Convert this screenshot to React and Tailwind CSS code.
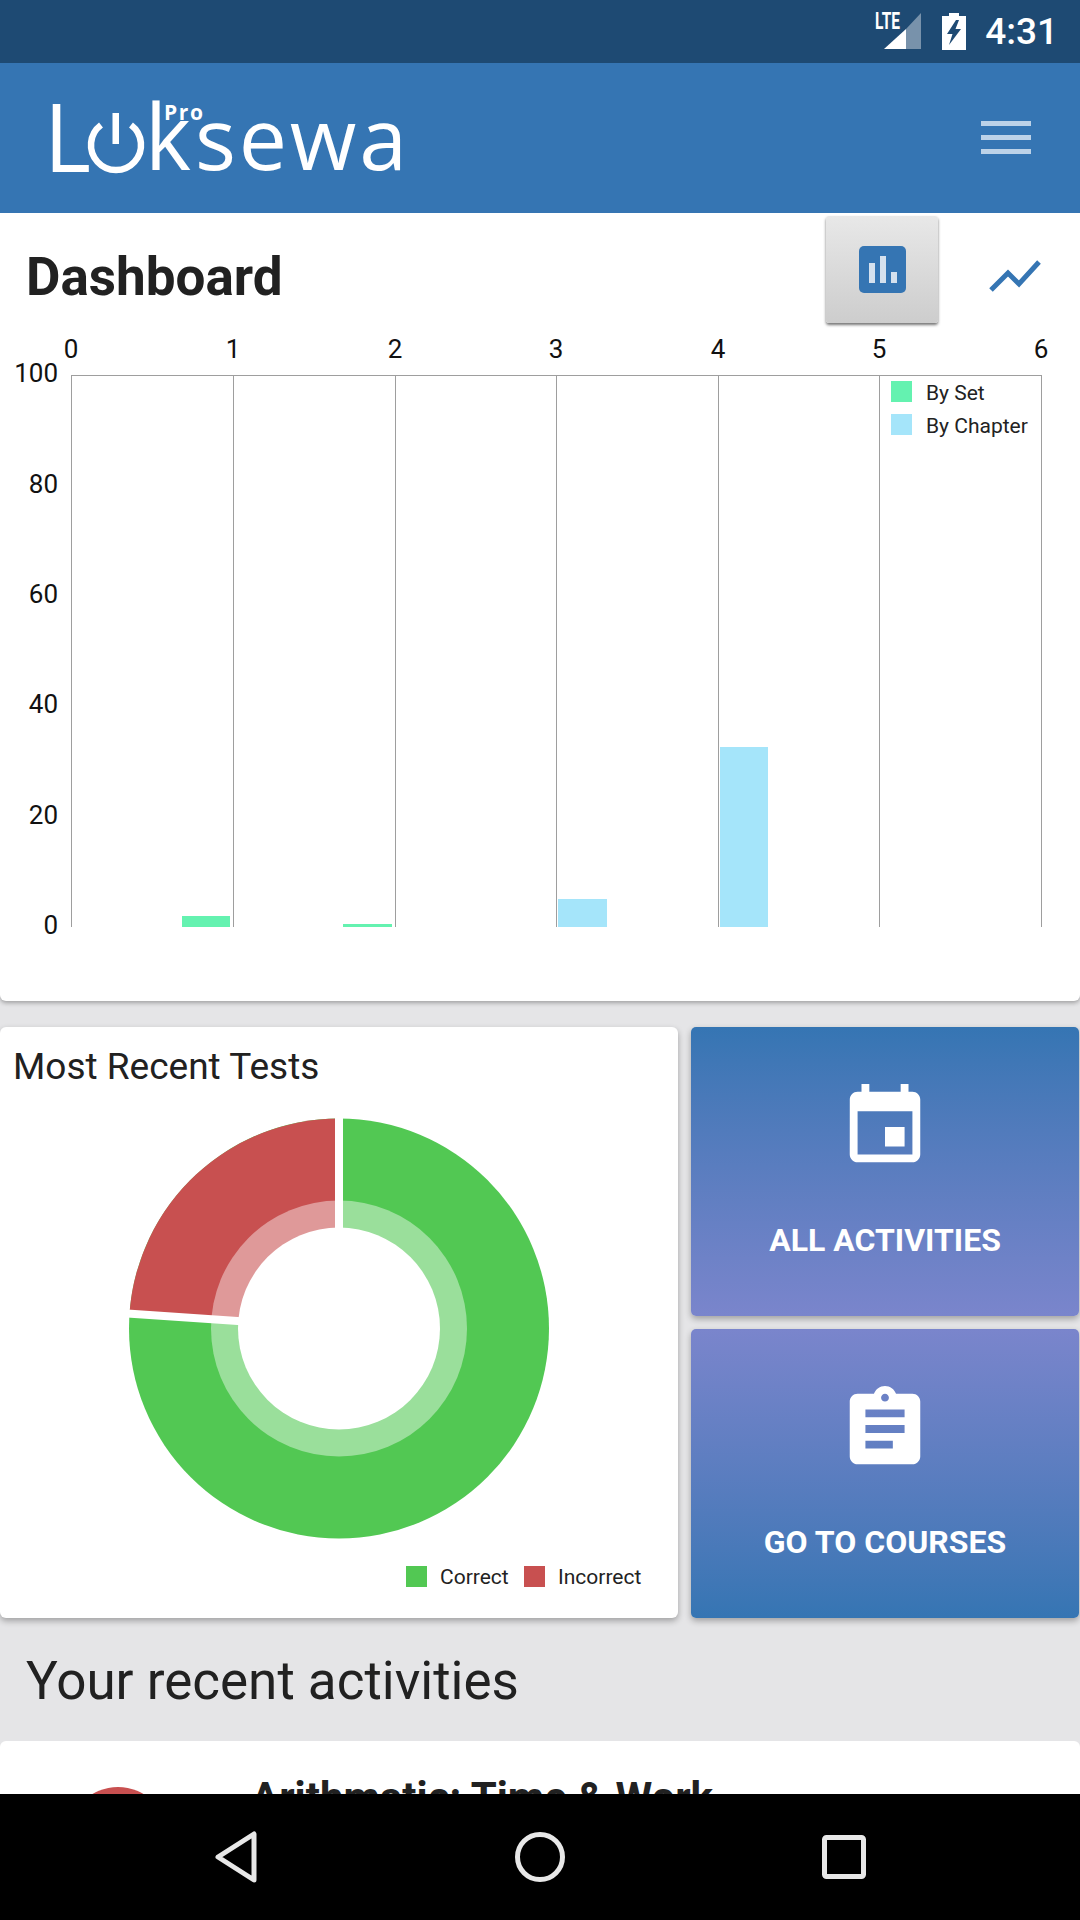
import React from "react";

const yLabels = [
  { label: "100", y: 382 - 330 },
  { label: "80", y: 493 - 330 },
  { label: "60", y: 603 - 330 },
  { label: "40", y: 713 - 330 },
  { label: "20", y: 824 - 330 },
  { label: "0", y: 934 - 330 },
];

const xTicks = [71, 233, 395, 556, 718, 879, 1041];

const bars = [
  { x: 182, w: 48, top: 916, color: "#64f2b0" },
  { x: 343, w: 49, top: 924, color: "#64f2b0" },
  { x: 558, w: 49, top: 899, color: "#a5e5fa" },
  { x: 720, w: 48, top: 747, color: "#a5e5fa" },
];

const StatusBar = () => (
  <div className="flex h-[63px] shrink-0 items-center justify-end bg-[#1e4a73] pr-[22px]">
    <svg width="48" height="40" viewBox="0 0 48 40" className="mr-[19px] mt-[-1px]">
      <text x="0" y="18" fontSize="23" fontWeight="700" fill="#fff" textLength="25" lengthAdjust="spacingAndGlyphs">
        LTE
      </text>
      <path d="M9 38 L31 18 L31 38 Z" fill="#fff" />
      <path d="M31 18 L46 2 L46 38 L31 38 Z" fill="#fff" fillOpacity="0.4" />
    </svg>
    <svg width="24" height="37" viewBox="0 0 24 37" className="mr-[19px]">
      <path
        fillRule="evenodd"
        d="M7 0 H17 V3 H24 V37 H0 V3 H7 Z M14 7 L5 21 H10.5 L7 32 L19 16 H13.5 L17 7 Z"
        fill="#fff"
      />
    </svg>
    <span className="text-[37px] font-medium leading-none text-white">4:31</span>
  </div>
);

const Logo = () => (
  <svg width="370" height="130" viewBox="40 73 370 130" className="ml-[40px] font-['Open_Sans']">
    <text x="44" y="172" fontSize="95" fontWeight="500" fill="#fff" textLength="47" lengthAdjust="spacingAndGlyphs">
      L
    </text>
    <path d="M101 125 A25 25 0 1 0 131 125" fill="none" stroke="#fff" strokeWidth="6.5" />
    <rect x="112.5" y="113" width="6.5" height="31" fill="#fff" />
    <text x="145" y="170" fontSize="92" fontWeight="500" fill="#fff" textLength="46" lengthAdjust="spacingAndGlyphs">
      k
    </text>
    <text x="195" y="170" fontSize="86" fontWeight="500" fill="#fff" textLength="212" lengthAdjust="spacing">
      sewa
    </text>
    <text x="164" y="120" fontSize="21" fontWeight="700" fill="#fff" textLength="39">
      Pro
    </text>
  </svg>
);

const AppBar = () => (
  <div className="flex h-[150px] shrink-0 items-center justify-between bg-[#3575b3]">
    <Logo />
    <div className="mb-[2px] mr-[49px] flex w-[50px] flex-col gap-[9px]">
      <div className="h-[5px] bg-[#bcd2e8]" />
      <div className="h-[5px] bg-[#bcd2e8]" />
      <div className="h-[5px] bg-[#bcd2e8]" />
    </div>
  </div>
);

const BarChart = () => (
  <svg width="1080" height="640" viewBox="0 0 1080 640" className="block">
    {xTicks.map((x) => (
      <line key={x} x1={x + 0.5} y1="45" x2={x + 0.5} y2="597" stroke="#9e9e9e" strokeWidth="1" />
    ))}
    <line x1="71" y1="45.5" x2="1041" y2="45.5" stroke="#9e9e9e" strokeWidth="1" />
    {xTicks.map((x, i) => (
      <text key={x} x={x} y="28" fontSize="26" textAnchor="middle" fill="#111">
        {i}
      </text>
    ))}
    {yLabels.map((t) => (
      <text key={t.label} x="58" y={t.y} fontSize="26" textAnchor="end" fill="#111">
        {t.label}
      </text>
    ))}
    {bars.map((b) => (
      <rect key={b.x} x={b.x} y={b.top - 330} width={b.w} height={927 - b.top} fill={b.color} />
    ))}
    <rect x="891" y="51" width="21" height="21" fill="#64f2b0" />
    <text x="926" y="70" fontSize="21" fill="#222">
      By Set
    </text>
    <rect x="891" y="84" width="21" height="21" fill="#a5e5fa" />
    <text x="926" y="103" fontSize="21" fill="#222">
      By Chapter
    </text>
  </svg>
);

const DashboardCard = () => (
  <div className="flex h-[788px] shrink-0 flex-col rounded-b-[6px] bg-white shadow-[0_2px_4px_rgba(0,0,0,0.3)]">
    <div className="flex h-[117px] shrink-0 items-start">
      <h1 className="ml-[26px] mt-[34px] text-[53px] font-bold leading-[60px] text-[#212121]">Dashboard</h1>
      <div className="ml-auto mr-[142px] mt-[3px] flex h-[107px] w-[112px] items-center justify-center rounded-[3px] bg-gradient-to-b from-[#e8e8e8] to-[#cdcdcd] shadow-[0_2px_3px_rgba(0,0,0,0.55)]">
        <svg width="47" height="47" viewBox="0 0 47 47">
          <rect width="47" height="47" rx="5" fill="#3575b3" />
          <rect x="10" y="17" width="6" height="20" fill="#d5e1ee" />
          <rect x="21" y="10" width="6" height="27" fill="#d5e1ee" />
          <rect x="32" y="26" width="6" height="11" fill="#d5e1ee" />
        </svg>
      </div>
      <svg width="52" height="34" viewBox="0 0 52 34" className="absolute left-[989px] top-[259px]">
        <path d="M2 31 L19 14 L30 25 L50 3" fill="none" stroke="#3575b3" strokeWidth="5" />
      </svg>
    </div>
    <BarChart />
  </div>
);

const PieCard = () => (
  <div className="flex h-[591px] w-[678px] shrink-0 flex-col rounded-[6px] bg-white shadow-[0_3px_6px_rgba(0,0,0,0.3)]">
    <h2 className="ml-[13px] mt-[20px] h-[53px] text-[37px] leading-[40px] text-[#212121]">Most Recent Tests</h2>
    <svg width="678" height="440" viewBox="0 1100 678 440" className="block">
      <circle cx="339" cy="1328.5" r="210" fill="#52c853" />
      <path d="M339 1328.5 L339 1118.5 A210 210 0 0 0 129.5 1313 Z" fill="#c85050" />
      <circle cx="339" cy="1328.5" r="128" fill="#fff" fillOpacity="0.42" />
      <circle cx="339" cy="1328.5" r="101" fill="#fff" />
      <line x1="339" y1="1328" x2="339" y2="1110" stroke="#fff" strokeWidth="8" />
      <line x1="339" y1="1328" x2="120" y2="1313" stroke="#fff" strokeWidth="8" />
    </svg>
    <div className="ml-[406px] mt-[24px] flex items-center text-[21px] leading-[21px] text-[#222]">
      <div className="h-[21px] w-[21px] bg-[#52c853]" />
      <span className="ml-[13px] mt-[3px] w-[84px]">Correct</span>
      <div className="h-[21px] w-[21px] bg-[#c85050]" />
      <span className="ml-[13px] mt-[3px]">Incorrect</span>
    </div>
  </div>
);

const ActionCard = ({ label, reverse, path, className }) => (
  <div
    className={`flex h-[289px] flex-col items-center rounded-[5px] shadow-[0_3px_6px_rgba(0,0,0,0.3)] ${
      reverse
        ? "bg-gradient-to-b from-[#7a85cc] to-[#3575b3]"
        : "bg-gradient-to-b from-[#3575b3] to-[#7a85cc]"
    } ${className}`}
  >
    <svg width="94" height="94" viewBox="0 0 24 24" className="mt-[53px] mr-[1px]" fill="#fff">
      <path d={path} />
    </svg>
    <span className="mt-[46px] text-[32px] font-bold leading-[40px] text-white">{label}</span>
  </div>
);

const ActionColumn = () => (
  <div className="ml-[13px] flex w-[388px] flex-col">
    <ActionCard
      label="ALL ACTIVITIES"
      path="M17 12h-5v5h5v-5zM16 1v2H8V1H6v2H5c-1.11 0-1.99.9-1.99 2L3 19c0 1.1.89 2 2 2h14c1.1 0 2-.9 2-2V5c0-1.1-.9-2-2-2h-1V1h-2zm3 18H5V8h14v11z"
    />
    <ActionCard
      reverse
      className="mt-[13px]"
      label="GO TO COURSES"
      path="M19 3h-4.18C14.4 1.84 13.3 1 12 1c-1.3 0-2.4.84-2.82 2H5c-1.1 0-2 .9-2 2v14c0 1.1.9 2 2 2h14c1.1 0 2-.9 2-2V5c0-1.1-.9-2-2-2zm-7 0c.55 0 1 .45 1 1s-.45 1-1 1-1-.45-1-1 .45-1 1-1zm2 14H7v-2h7v2zm3-4H7v-2h10v2zm0-4H7V7h10v2z"
    />
  </div>
);

const NavBar = () => (
  <div className="flex h-[126px] shrink-0 items-center bg-black pl-[215px]">
    <svg width="42" height="52" viewBox="0 0 42 52">
      <path d="M39 3 L39 49 L3 26 Z" fill="none" stroke="#e8e8e8" strokeWidth="5" strokeLinejoin="round" />
    </svg>
    <svg width="50" height="50" viewBox="0 0 50 50" className="ml-[258px]">
      <circle cx="25" cy="25" r="22.5" fill="none" stroke="#e8e8e8" strokeWidth="5" />
    </svg>
    <svg width="44" height="44" viewBox="0 0 44 44" className="ml-[257px]">
      <rect x="2.5" y="2.5" width="39" height="39" rx="2" fill="none" stroke="#e8e8e8" strokeWidth="5" />
    </svg>
  </div>
);

export default function App() {
  return (
    <div className="relative flex h-[1920px] w-[1080px] flex-col overflow-hidden bg-[#e5e5e7] font-['Roboto',sans-serif]">
      <StatusBar />
      <AppBar />
      <div className="flex-1 overflow-hidden">
        <DashboardCard />
        <div className="mt-[26px] flex">
          <PieCard />
          <ActionColumn />
        </div>
        <h2 className="flex h-[123px] items-center pl-[26px] pt-[5px] text-[53px] text-[#212121]">Your recent activities</h2>
        <div className="flex h-[200px] rounded-t-[6px] bg-white pt-[33px]">
          <div className="ml-[68px] mt-[13px] h-[100px] w-[100px] rounded-full bg-[#c85050]" />
          <span className="ml-[83px] text-[42px] font-bold leading-[48px] text-[#212121]">Arithmatic: Time &amp; Work</span>
        </div>
      </div>
      <NavBar />
    </div>
  );
}
